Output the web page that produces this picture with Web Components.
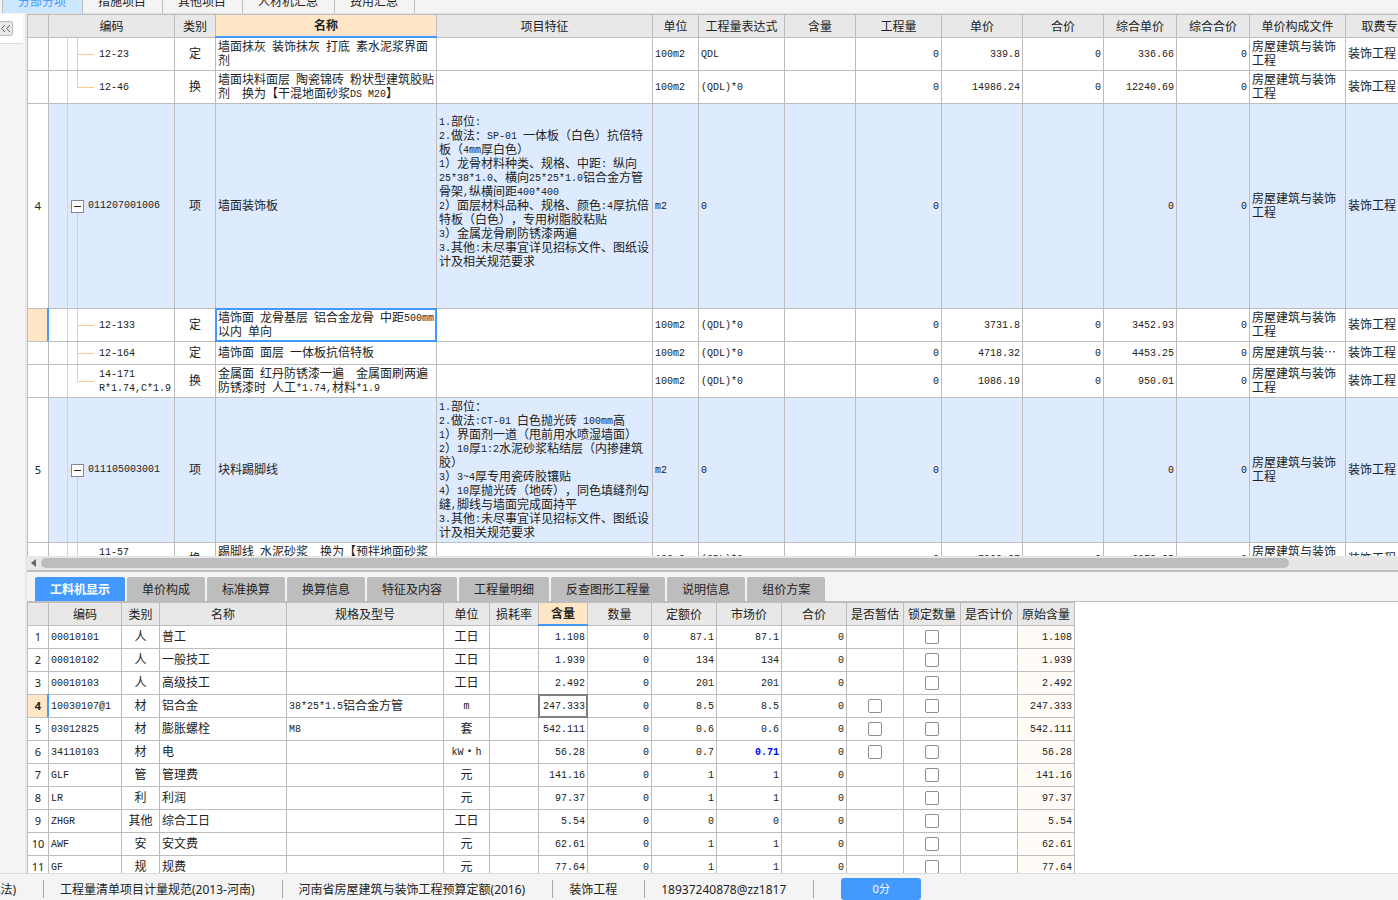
<!DOCTYPE html>
<html lang="zh-CN">
<head>
<meta charset="utf-8">
<title>分部分项</title>
<style>
  body {
    margin: 0;
    font: 12px/14px "Noto Sans", "Noto Sans CJK SC", sans-serif;
    color: #222;
    text-spacing-trim: space-all;
    --line: #bdbdbd;
    --blue: #4499ff;
    --peach: #ffe6c7;
    --panel: #f4f4f4;
  }
</style>
</head>
<body>
<app-shell>
  <module-tabs slot="tabs"></module-tabs>
  <side-rail slot="rail"></side-rail>
  <grid-pane slot="main"><data-grid name="bill"></data-grid></grid-pane>
  <detail-pane slot="detail"><data-grid name="resource"></data-grid></detail-pane>
  <status-bar slot="status"></status-bar>
</app-shell>

<script>
function attach(host, html) {
  const t = document.createElement('template');
  t.innerHTML = html;
  host.attachShadow({ mode: 'open' }).append(t.content.cloneNode(true));
}

class AppShell extends HTMLElement {
  constructor() {
    super();
    attach(this, `
      <style>
        :host {
          display: grid;
          height: 100vh;
          overflow: hidden;
          grid-template-columns: 27px minmax(0, 1fr);
          grid-template-rows: 13px minmax(0, 559fr) minmax(0, 301fr) 27px;
          background: var(--panel);
        }
        ::slotted([slot=tabs]), ::slotted([slot=status]) { grid-column: 1 / 3; }
        ::slotted([slot=rail]) { grid-row: 2 / 4; grid-column: 1; }
      </style>
      <slot name="tabs"></slot>
      <slot name="rail"></slot>
      <slot name="main"></slot>
      <slot name="detail"></slot>
      <slot name="status"></slot>`);
  }
}

class ModuleTabs extends HTMLElement {
  constructor() {
    super();
    const names = ['分部分项', '措施项目', '其他项目', '人材机汇总', '费用汇总'];
    attach(this, `
      <style>
        :host { display: flex; align-items: flex-end; overflow: hidden; padding-left: 2px; }
        button {
          flex: none; height: 22px; padding: 0 16px 0 15px; border: 0;
          border-right: 1px solid var(--line);
          background: none; color: inherit; font: inherit; line-height: 22px;
        }
        button:first-of-type { border-left: 1px solid var(--line); }
        button[aria-selected=true] { background: #cde7ff; color: var(--blue); }
      </style>
      ${names.map((n, i) => `<button role="tab" aria-selected="${i === 0}">${n}</button>`).join('')}`);
  }
}

class SideRail extends HTMLElement {
  constructor() {
    super();
    attach(this, `
      <style>
        :host { display: block; border-right: 2px solid #e9e9e9; }
        div {
          display: flex; align-items: center; width: 23px; height: 29px; margin-top: 1px;
          background: #fff; border-bottom: 1px solid #ddd;
        }
        button {
          width: 13px; height: 15px; padding: 0; border: 1px solid #bbb; border-left: 0;
          border-radius: 0 3px 3px 0; background: #e8e8e8;
        }
        svg { display: block; }
      </style>
      <div><button aria-label="收起"><svg width="12" height="13" viewBox="0 0 12 13" fill="none" stroke="#666"><path d="M5 3L1.5 6.5L5 10M10 3L6.5 6.5L10 10"/></svg></button></div>`);
  }
}

class GridPane extends HTMLElement {
  constructor() {
    super();
    attach(this, `
      <style>
        :host {
          display: flex; flex-direction: column; min-width: 0; box-sizing: border-box;
          border-top: 1px solid #e0e0e0; border-bottom: 2px solid var(--line);
        }
        .view { flex: 1; min-height: 0; overflow: hidden; background: #fff; }
        .bar { display: flex; align-items: center; height: 14px; background: #e7e7e7; }
        .bar svg { flex: none; width: 14px; height: 14px; }
        .thumb { width: 91%; height: 10px; border-radius: 5px; background: var(--line); }
      </style>
      <div class="view"><slot></slot></div>
      <div class="bar">
        <svg viewBox="0 0 14 14"><path d="M9 3V11L4 7Z" fill="#666"/></svg>
        <div class="thumb"></div>
      </div>`);
  }
}

class DetailPane extends HTMLElement {
  constructor() {
    super();
    const names = ['工料机显示', '单价构成', '标准换算', '换算信息', '特征及内容', '工程量明细', '反查图形工程量', '说明信息', '组价方案'];
    attach(this, `
      <style>
        :host { display: flex; flex-direction: column; min-width: 0; overflow: hidden; }
        nav { display: flex; gap: 2px; padding: 5px 0 0 8px; }
        button {
          height: 24px; padding: 2px 15px 0; border: 0; border-radius: 2px 2px 0 0;
          background: var(--line); color: inherit; font: inherit; white-space: nowrap;
        }
        button[aria-selected=true] { background: var(--blue); color: #fff; font-weight: bold; }
        .view { flex: 1; min-height: 0; overflow: hidden; background: #fff; border-top: 1px solid var(--line); }
      </style>
      <nav role="tablist">${names.map((n, i) => `<button role="tab" aria-selected="${i === 0}">${n}</button>`).join('')}</nav>
      <div class="view"><slot></slot></div>`);
  }
}

class StatusBar extends HTMLElement {
  constructor() {
    super();
    attach(this, `
      <style>
        :host {
          display: flex; align-items: flex-start; box-sizing: border-box; overflow: hidden;
          border-top: 1px solid #dcdcdc; padding-top: 4px; background: var(--panel);
        }
        span {
          flex: none; height: 18px; margin-top: 2px; padding: 0 27px 0 16px; line-height: 20px;
          border-right: 1px solid #a0a6ae; white-space: nowrap;
        }
        span:first-of-type {
          display: flex; justify-content: flex-end; width: 16px; padding-left: 0; overflow: hidden;
        }
        button {
          flex: none; width: 80px; height: 22px; margin-left: 27px; padding: 0; border: 0;
          border-radius: 3px; background: var(--blue); color: #fff; font: inherit; font-size: 11px;
        }
      </style>
      <span>税法)</span>
      <span>工程量清单项目计量规范(2013-河南)</span>
      <span>河南省房屋建筑与装饰工程预算定额(2016)</span>
      <span>装饰工程</span>
      <span>18937240878@zz1817</span>
      <button>0分</button>`);
  }
}

/* Column: [title, width, alignment] */
const CHECK = { check: true };
const FILE2 = '房屋建筑与装饰\n工程';
const GRIDS = {
  bill: {
    label: '分部分项清单',
    cols: [['', 21, 'c'], ['编码', 126, 'l'], ['类别', 41, 'c'], ['名称', 221, 'l'], ['项目特征', 216, 'l'],
      ['单位', 46, 'l'], ['工程量表达式', 86, 'l'], ['含量', 71, 'r'], ['工程量', 86, 'r'], ['单价', 81, 'r'],
      ['合价', 81, 'r'], ['综合单价', 73, 'r'], ['综合合价', 73, 'r'], ['单价构成文件', 96, 'l'], ['取费专业', 80, 'l']],
    activeCol: 3,
    rows: [
      { h: 33, tree: 'mid', cells: ['', '12-23', '定', '墙面抹灰 装饰抹灰 打底 素水泥浆界面\n剂', '', '100m2', 'QDL', '', '0', '339.8', '0', '336.66', '0', FILE2, '装饰工程'] },
      { h: 33, tree: 'last', cells: ['', '12-46', '换', '墙面块料面层 陶瓷锦砖 粉状型建筑胶贴\n剂  换为【干混地面砂浆DS M20】', '', '100m2', '(QDL)*0', '', '0', '14986.24', '0', '12240.69', '0', FILE2, '装饰工程'] },
      { h: 205, tree: 'parent', cells: ['4', '011207001006', '项', '墙面装饰板', '1.部位:\n2.做法：SP-01 一体板（白色）抗倍特\n板（4mm厚白色）\n1）龙骨材料种类、规格、中距: 纵向\n25*38*1.0、横向25*25*1.0铝合金方管\n骨架,纵横间距400*400\n2）面层材料品种、规格、颜色:4厚抗倍\n特板（白色），专用树脂胶粘贴\n3）金属龙骨刷防锈漆两遍\n3.其他:未尽事宜详见招标文件、图纸设\n计及相关规范要求\n\n\u00a0', 'm2', '0', '', '0', '', '', '0', '0', FILE2, '装饰工程'] },
      { h: 33, tree: 'mid', current: true, selected: 3, cells: ['', '12-133', '定', '墙饰面 龙骨基层 铝合金龙骨 中距500mm\n以内 单向', '', '100m2', '(QDL)*0', '', '0', '3731.8', '0', '3452.93', '0', FILE2, '装饰工程'] },
      { h: 23, tree: 'mid', cells: ['', '12-164', '定', '墙饰面 面层 一体板抗倍特板', '', '100m2', '(QDL)*0', '', '0', '4718.32', '0', '4453.25', '0', '房屋建筑与装…', '装饰工程'] },
      { h: 33, tree: 'last', cells: ['', '14-171\nR*1.74,C*1.9', '换', '金属面 红丹防锈漆一遍  金属面刷两遍\n防锈漆时 人工*1.74,材料*1.9', '', '100m2', '(QDL)*0', '', '0', '1086.19', '0', '950.01', '0', FILE2, '装饰工程'] },
      { h: 145, tree: 'parent', cells: ['5', '011105003001', '项', '块料踢脚线', '1.部位：\n2.做法:CT-01 白色抛光砖 100mm高\n1）界面剂一道（甩前用水喷湿墙面）\n2）10厚1:2水泥砂浆粘结层（内掺建筑\n胶）\n3）3~4厚专用瓷砖胶镶贴\n4）10厚抛光砖（地砖），同色填缝剂勾\n缝,脚线与墙面完成面持平\n3.其他:未尽事宜详见招标文件、图纸设\n计及相关规范要求', 'm2', '0', '', '0', '', '', '0', '0', FILE2, '装饰工程'] },
      { h: 33, tree: 'mid', cells: ['', '11-57\n\u00a0', '换', '踢脚线 水泥砂浆  换为【预拌地面砂浆\n\u00a0', '', '100m2', '(QDL)*0', '', '0', '7099.27', '0', '6372.25', '0', '房屋建筑与装饰\n\u00a0', '装饰工程'] },
    ],
  },
  resource: {
    label: '工料机显示',
    cols: [['', 21, 'c'], ['编码', 73, 'l'], ['类别', 38, 'c'], ['名称', 127, 'l'], ['规格及型号', 157, 'l'], ['单位', 46, 'c'],
      ['损耗率', 49, 'r'], ['含量', 49, 'r'], ['数量', 64, 'r'], ['定额价', 65, 'r'], ['市场价', 65, 'r'], ['合价', 65, 'r'],
      ['是否暂估', 57, 'c'], ['锁定数量', 57, 'c'], ['是否计价', 57, 'c'], ['原始含量', 57, 'r']],
    activeCol: 7,
    tintCol: 15,
    rows: [
      ['00010101', '人', '普工', '', '工日', '1.108', '87.1', '87.1'],
      ['00010102', '人', '一般技工', '', '工日', '1.939', '134', '134'],
      ['00010103', '人', '高级技工', '', '工日', '2.492', '201', '201'],
      ['10030107@1', '材', '铝合金', '38*25*1.5铝合金方管', 'm', '247.333', '8.5', '8.5', 1],
      ['03012825', '材', '膨胀螺栓', 'M8', '套', '542.111', '0.6', '0.6', 1],
      ['34110103', '材', '电', '', 'kW·h', '56.28', '0.7', '0.71', 1],
      ['GLF', '管', '管理费', '', '元', '141.16', '1', '1'],
      ['LR', '利', '利润', '', '元', '97.37', '1', '1'],
      ['ZHGR', '其他', '综合工日', '', '工日', '5.54', '0', '0'],
      ['AWF', '安', '安文费', '', '元', '62.61', '1', '1'],
      ['GF', '规', '规费', '', '元', '77.64', '1', '1'],
    ].map(([code, kind, name, spec, unit, qty, base, market, est], i) => ({
      h: 23,
      current: i === 3,
      selected: i === 3 ? 7 : -1,
      changed: i === 5 ? 10 : -1,
      cells: [String(i + 1), code, kind, name, spec, unit, '', qty, '0', base, market, '0', est ? CHECK : '', CHECK, '', qty],
    })),
  },
};

/* Half-width runs take the fixed-pitch face, so two of them fill one ideograph. */
const runs = s => s
  .replace(/[\x20-\x7e\u00a0]+/g, m => `<span class="m">${m.replace(/&/g, '&amp;').replace(/</g, '&lt;')}</span>`);

class DataGrid extends HTMLElement {
  constructor() {
    super();
    const g = GRIDS[this.getAttribute('name')];
    const total = g.cols.reduce((a, c) => a + c[1], 1);
    const cell = (row, v, i) => {
      const cls = [g.cols[i][2]];
      if (i === 0) cls.push('num');
      if (i === 1 && row.tree) cls.push('tree', row.tree);
      if (i === row.selected) cls.push('sel');
      if (i === row.changed) cls.push('chg');
      if (i === g.tintCol) cls.push('tint');
      if (v.check) cls.push('box');
      const body = v.check
        ? `<input type="checkbox" aria-label="${row.cells[3]} ${g.cols[i][0]}">`
        : i === 0 ? v : runs(v);
      const toggle = i === 1 && row.tree === 'parent' ? '<button aria-label="折叠"></button>' : '';
      return `<td class="${cls.join(' ')}">${toggle}${body}</td>`;
    };
    attach(this, `
      <style>
        :host { display: block; }
        table {
          table-layout: fixed; width: ${total}px; border-collapse: separate; border-spacing: 0;
          border: solid var(--line); border-width: 1px 0 0 1px;
        }
        th, td {
          box-sizing: border-box; padding: 0 2px 2px; overflow: hidden; white-space: pre;
          border: solid var(--line); border-width: 0 1px 1px 0; vertical-align: middle;
          font-family: "Noto Sans CJK SC", sans-serif; font-weight: normal;
        }
        th { height: 23px; padding: 0; background: #e8e8e8; text-align: center; }
        th.on {
          padding-bottom: 2px; background: var(--peach); font-weight: bold;
          position: relative; overflow: visible;
        }
        th.on::after { content: ""; position: absolute; inset: auto -1px -1px -1px; height: 2px; background: var(--blue); }
        td.l { text-align: left; }
        td.c { text-align: center; }
        td.r { text-align: right; }
        td.box { padding: 0; }
        td.num { padding: 0; background: #fff; font-family: "Noto Sans", sans-serif; font-size: 11px; }
        .m { font-family: "Liberation Mono", monospace; font-size: 10px; line-height: 0; vertical-align: 1px; }
        tr.group { background: #deebff; }
        tr.current td.num { background: var(--peach); font-weight: bold; position: relative; overflow: visible; }
        tr.current td.num::after {
          content: ""; position: absolute; inset: -1px -1px 0 auto; width: 2px; background: var(--blue);
        }
        td.sel { position: relative; overflow: visible; }
        td.sel::after { content: ""; position: absolute; inset: -1px; border: 2px solid var(--frame); }
        td.chg { color: #00f; font-weight: bold; }
        td.tint { background: #fffcf7; }
        td.tree {
          --t: linear-gradient(#fc8, #fc8);
          padding-left: 50px; background-repeat: no-repeat;
          background-image: var(--t), var(--t), var(--t);
          background-position: 18px 0, 28px 0, 28px 50%;
          background-size: 1px 100%, 1px 100%, 17px 1px;
        }
        td.last { background-size: 1px 100%, 1px 50%, 17px 1px; }
        td.parent {
          padding-left: 22px;
          background-position: 18px 0, 28px 100%, 18px 50%;
          background-size: 1px 100%, 1px 50%, 5px 1px;
        }
        button {
          width: 13px; height: 13px; margin: 0 4px 0 0; padding: 0; vertical-align: middle;
          border: 1px solid #888;
          background: linear-gradient(#222, #222) center / 7px 1px no-repeat #fff;
        }
        input {
          appearance: none; display: block; width: 14px; height: 14px; margin: 0 auto;
          border: 1px solid #8f8f8f; border-radius: 2px; background: #fff;
        }
      </style>
      <table aria-label="${g.label}" style="--frame:${g.tintCol ? '#808080' : '#4499ff'}">
        <colgroup>${g.cols.map(c => `<col style="width:${c[1]}px">`).join('')}</colgroup>
        <thead><tr>${g.cols.map((c, i) => `<th${i === g.activeCol ? ' class="on"' : ''}>${c[0]}</th>`).join('')}</tr></thead>
        <tbody>${g.rows.map(r => `<tr class="${r.tree === 'parent' ? 'group' : ''}${r.current ? 'current' : ''}" style="height:${r.h}px">${r.cells.map((v, i) => cell(r, v, i)).join('')}</tr>`).join('')}</tbody>
      </table>`);
  }
}

customElements.define('app-shell', AppShell);
customElements.define('module-tabs', ModuleTabs);
customElements.define('side-rail', SideRail);
customElements.define('grid-pane', GridPane);
customElements.define('detail-pane', DetailPane);
customElements.define('status-bar', StatusBar);
customElements.define('data-grid', DataGrid);
</script>
</body>
</html>
